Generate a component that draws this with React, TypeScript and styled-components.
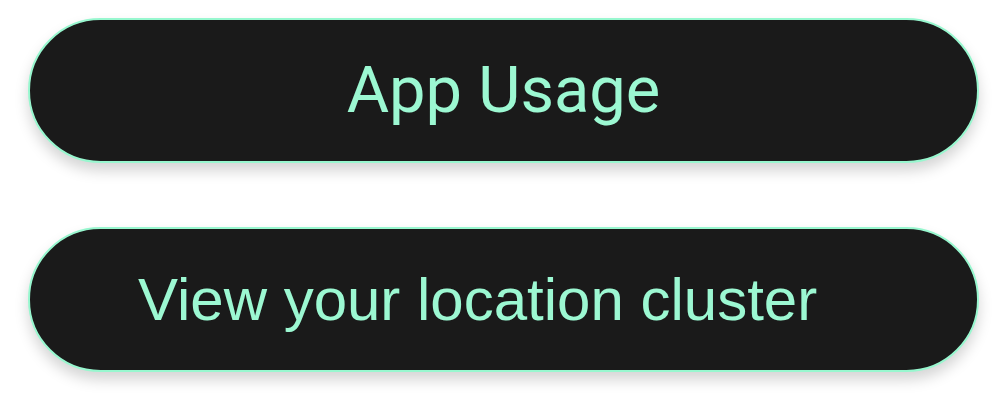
import React from "react";
import styled, { createGlobalStyle } from "styled-components";

const Global = createGlobalStyle`
  html, body { margin: 0; padding: 0; background: #ffffff; }
  * { box-sizing: border-box; }
`;

const Page = styled.div`
  display: flex;
  flex-direction: column;
  gap: 64px;
  padding: 18px 29px 38px 28px;
  width: 1008px;
  min-height: 408px;
`;

const Pill = styled.button<{ $align: "center" | "start"; $font: string; $size: number }>`
  display: flex;
  align-items: center;
  justify-content: ${(p) => (p.$align === "center" ? "center" : "flex-start")};
  padding: 0 0 0 ${(p) => (p.$align === "center" ? 0 : 108)}px;
  width: 951px;
  height: 145px;
  flex: none;
  border-radius: 73px;
  background: #1a1a1a;
  border: 2.5px solid #98f7cf;
  box-shadow: 0 8px 14px rgba(0, 0, 0, 0.17);
  color: #9cf8d2;
  font-family: ${(p) => p.$font};
  font-size: ${(p) => p.$size}px;
  line-height: 1;
  cursor: pointer;
`;

export default function App() {
  return (
    <>
      <Global />
      <Page>
        <Pill $align="center" $font="Roboto, 'Liberation Sans', sans-serif" $size={65}>
          App Usage
        </Pill>
        <Pill $align="start" $font="'Liberation Sans', Arial, sans-serif" $size={60}>
          View your location cluster
        </Pill>
      </Page>
    </>
  );
}
